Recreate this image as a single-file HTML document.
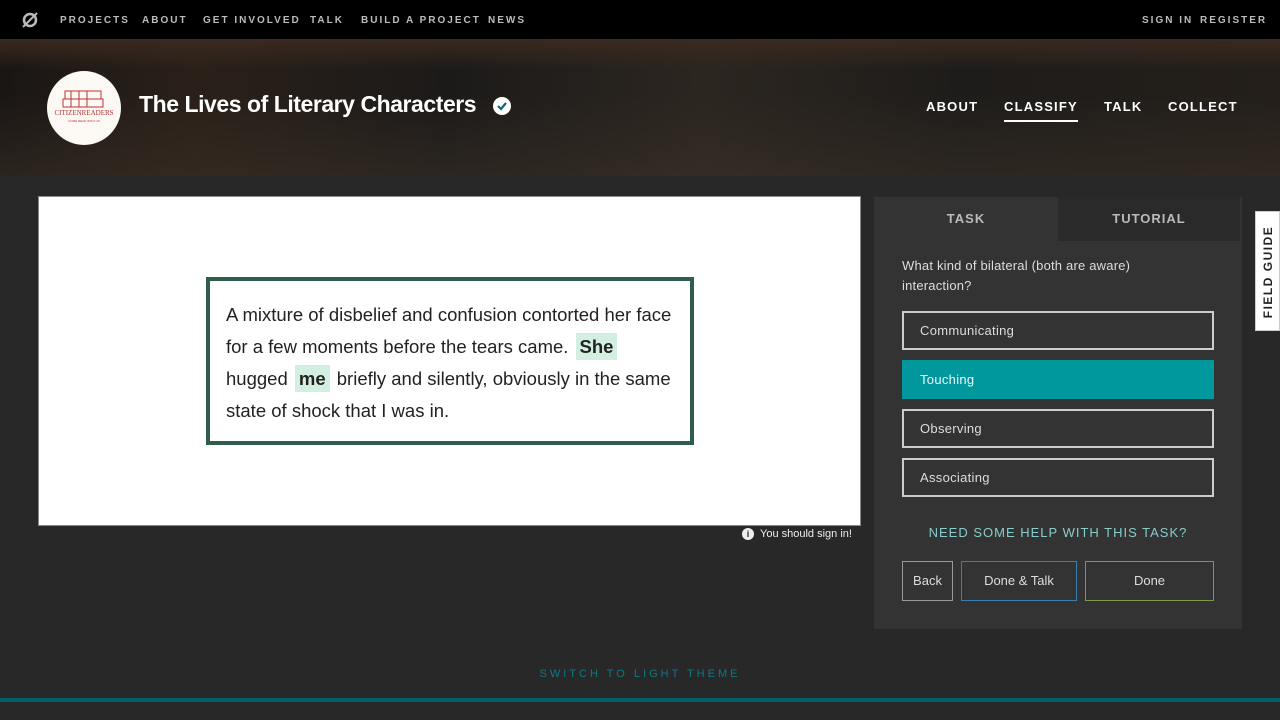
<!DOCTYPE html>
<html><head><meta charset="utf-8"><style>
*{margin:0;padding:0;box-sizing:border-box}
body{width:1280px;height:720px;background:#282828;font-family:"Liberation Sans",sans-serif;position:relative;overflow:hidden}
.top{position:absolute;left:0;top:0;width:1280px;height:39px;background:#000;color:#bbb;font-size:10px;letter-spacing:2px;font-weight:bold}
.top span{position:absolute;top:15px}
.hero{position:absolute;left:0;top:39px;width:1280px;height:137px;background:linear-gradient(90deg,#1a1614 0%,#2a2019 15%,#1c1a19 35%,#2c2620 55%,#1e1c1a 75%,#241f1a 100%)}
.hero:before{content:"";position:absolute;left:0;top:55px;right:0;height:82px;background:linear-gradient(rgba(0,0,0,0),rgba(60,50,40,.5))}
.hero:after{content:"";position:absolute;left:0;top:0;right:0;height:30px;background:linear-gradient(#3a2a20,rgba(0,0,0,0))}
.logo{position:absolute;left:47px;top:71px;width:74px;height:74px;border-radius:50%;background:#fcf8f4;z-index:2}
.title{position:absolute;left:139px;top:91px;color:#fff;font-size:23px;font-weight:bold;letter-spacing:-.45px;z-index:2}
.chk{position:absolute;left:493px;top:97px;width:18px;height:18px;border-radius:50%;background:#fff;z-index:2}
.pn{position:absolute;top:99px;color:#fff;font-size:13px;letter-spacing:1.2px;font-weight:bold;z-index:2}
.subj{position:absolute;left:38px;top:196px;width:823px;height:330px;background:#fff;border:1px solid #888}
.box{position:absolute;left:167px;top:80px;width:488px;height:168px;border:4px solid #2f5f4a;padding:18px 0 18px 16px;font-size:18.5px;line-height:32px;color:#222;white-space:nowrap}
.hl{background:#d3efe2;font-weight:bold;padding:3px 4px;margin:0 2px}
.panel{position:absolute;left:874px;top:197px;width:368px;height:432px;background:#333}
.tab{position:absolute;top:0;height:44px;font-size:13px;letter-spacing:1px;font-weight:bold;color:#bbb;text-align:center;line-height:44px}
.q{position:absolute;left:28px;top:59px;color:#ddd;font-size:13px;line-height:20px;letter-spacing:.2px}
.opt{position:absolute;left:28px;width:312px;height:39px;border:2px solid #ccc;color:#ddd;font-size:13px;line-height:35px;padding-left:16px;letter-spacing:.3px}
.btn{position:absolute;top:364px;height:40px;border:1px solid #888;color:#ddd;font-size:13px;text-align:center;line-height:38px}
</style></head><body>
<div class="top">
<svg style="position:absolute;left:21px;top:11px" width="18" height="18" viewBox="0 0 18 18"><circle cx="9" cy="9" r="6" fill="none" stroke="#bbb" stroke-width="2.5"/><line x1="2" y1="16" x2="16" y2="2" stroke="#bbb" stroke-width="2"/></svg>
<span style="left:60px">PROJECTS</span><span style="left:142px">ABOUT</span><span style="left:203px">GET INVOLVED</span><span style="left:310px">TALK</span><span style="left:361px">BUILD A PROJECT</span><span style="left:488px">NEWS</span>
<span style="left:1142px">SIGN IN</span><span style="left:1200px">REGISTER</span>
</div>
<div class="hero"></div>
<div class="logo"><svg width="74" height="74" viewBox="0 0 74 74"><g fill="none" stroke="#b33" stroke-width="1"><rect x="18" y="20" width="36" height="8"/><rect x="16" y="28" width="40" height="8"/><line x1="24" y1="20" x2="24" y2="36"/><line x1="32" y1="20" x2="32" y2="36"/><line x1="40" y1="20" x2="40" y2="36"/></g><text x="37" y="44" font-size="7" fill="#b33" text-anchor="middle" font-family="Liberation Serif">CITIZENREADERS</text><text x="37" y="51" font-size="3" fill="#b33" text-anchor="middle">COME READ WITH US</text></svg></div>
<div class="title">The Lives of Literary Characters</div>
<div class="chk"><svg width="18" height="18"><path d="M5 9l3 3 5-6" fill="none" stroke="#0a6a75" stroke-width="2.2"/></svg></div>
<div class="pn" style="left:926px">ABOUT</div>
<div class="pn" style="left:1004px">CLASSIFY<div style="height:2px;background:#fff;margin-top:6px"></div></div>
<div class="pn" style="left:1104px">TALK</div>
<div class="pn" style="left:1168px">COLLECT</div>
<div class="subj"><div class="box">A mixture of disbelief and confusion contorted her face<br>for a few moments before the tears came. <span class="hl">She</span><br>hugged <span class="hl">me</span> briefly and silently, obviously in the same<br>state of shock that I was in.</div></div>
<div style="position:absolute;left:742px;top:528px;color:#eee;font-size:11px"><span style="display:inline-block;width:12px;height:12px;border-radius:50%;background:#eee;color:#282828;font-size:9px;text-align:center;line-height:12px;font-weight:bold;margin-right:6px">i</span>You should sign in!</div>
<div class="panel">
<div class="tab" style="left:0;width:184px">TASK</div>
<div class="tab" style="left:184px;width:182px;background:#2a2a2a">TUTORIAL</div>
<div class="q">What kind of bilateral (both are aware)<br>interaction?</div>
<div class="opt" style="top:114px">Communicating</div>
<div class="opt" style="top:163px;background:#00979d;border-color:#00979d;color:#e8f8f8">Touching</div>
<div class="opt" style="top:212px">Observing</div>
<div class="opt" style="top:261px">Associating</div>
<div style="position:absolute;left:0;width:368px;top:328px;text-align:center;color:#8cc;font-size:13px;letter-spacing:1px">NEED SOME HELP WITH THIS TASK?</div>
<div class="btn" style="left:28px;width:51px;border-color:#999">Back</div>
<div class="btn" style="left:87px;width:116px;border-color:#3a7fb0">Done &amp; Talk</div>
<div class="btn" style="left:211px;width:129px;border-color:#7a9a50">Done</div>
</div>
<div style="position:absolute;left:1255px;top:211px;width:25px;height:120px;background:#fff;border:1px solid #ccc"><div style="position:absolute;left:12px;top:60px;transform:translate(-50%,-50%) rotate(-90deg);font-size:12px;font-weight:bold;letter-spacing:1.5px;white-space:nowrap;color:#222">FIELD GUIDE</div></div>
<div style="position:absolute;left:0;width:1280px;top:668px;text-align:center;color:#0a7a85;font-size:11px;letter-spacing:3px">SWITCH TO LIGHT THEME</div>
<div style="position:absolute;left:0;top:698px;width:1280px;height:4px;background:#005f6a"></div>
</body></html>
